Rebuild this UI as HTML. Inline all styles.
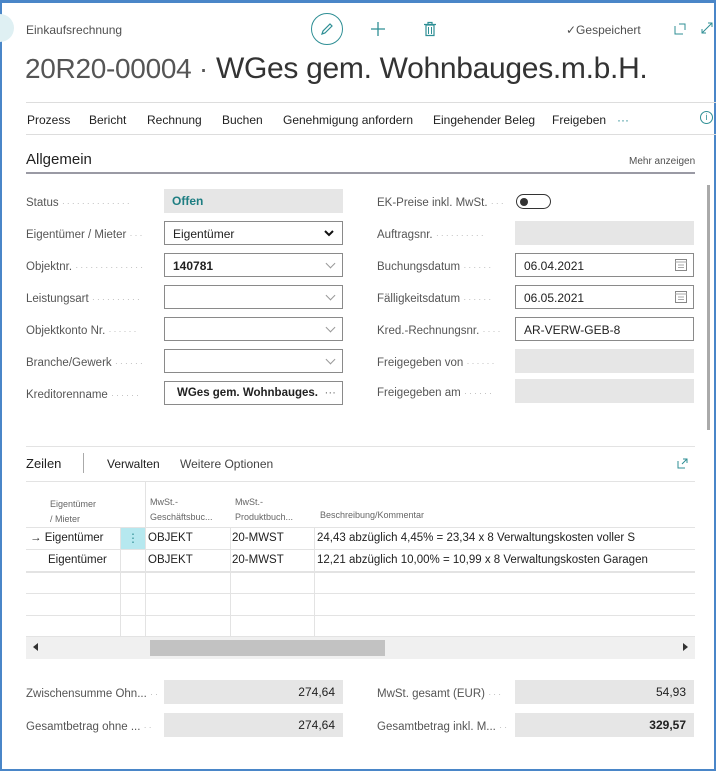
<!DOCTYPE html>
<html><head><meta charset="utf-8">
<style>
*{box-sizing:border-box;margin:0;padding:0}
body{width:716px;height:771px;overflow:hidden;background:#fff;font-family:"Liberation Sans",sans-serif;color:#212121;font-size:12px;position:relative}
.a{position:absolute;white-space:nowrap}
.frame{position:absolute;left:0;top:0;width:716px;height:771px;border:2px solid #4a86c8;border-top-width:3px}
.lbl{position:absolute;font-size:11.5px;color:#555;white-space:nowrap;overflow:hidden;margin-top:1px}
.lbl span.d{color:#bbb;letter-spacing:2px;font-size:9px}
.fld{position:absolute;height:24px;width:179px;border:1px solid #8a8a8a;background:#fff;font-size:12px;padding:5px 8px;white-space:nowrap}
.ro{border:none;background:#e6e6e6}
.chev{position:absolute;right:8px;top:8px;width:7px;height:7px;border-right:1px solid #999;border-bottom:1px solid #999;transform:rotate(45deg)}
.cell{position:absolute;font-size:11.5px;white-space:nowrap}
.hl{position:absolute;background:#e3e3e3;height:1px}
.vl{position:absolute;background:#e3e3e3;width:1px}
</style></head><body>
<div class="frame"></div>
<div class="a" style="left:-14px;top:14px;width:28px;height:28px;border-radius:50%;background:#dff0f3"></div>
<div class="a" style="left:26px;top:23px;font-size:12px;color:#505050">Einkaufsrechnung</div>
<div class="a" style="left:311px;top:13px;width:32px;height:32px;border-radius:50%;border:1.5px solid #2f8f95"></div>
<svg class="a" style="left:319px;top:21px" width="16" height="16" viewBox="0 0 16 16"><path d="M3 13l1-3 7-7 2 2-7 7z" fill="none" stroke="#2f8f95" stroke-width="1.2"/></svg>
<svg class="a" style="left:370px;top:21px" width="16" height="16"><path d="M8 1v14M1 8h14" stroke="#2f8f95" stroke-width="1.3"/></svg>
<svg class="a" style="left:423px;top:21px" width="14" height="16"><path d="M1 3.5h12M5 3V1.5h4V3M3 4h8v10.5H3z" fill="none" stroke="#2f8f95" stroke-width="1.2"/><path d="M5.5 6v7M8.5 6v7" stroke="#2f8f95"/></svg>
<div class="a" style="left:566px;top:23px;font-size:12px;color:#505050">✓Gespeichert</div>
<svg class="a" style="left:674px;top:23px" width="12" height="12"><path d="M1 3v8h8M5 1h6v6" fill="none" stroke="#2f8f95"/></svg>
<svg class="a" style="left:700px;top:21px" width="14" height="14"><path d="M2 12L12 2M8 2h4v4M2 8v4h4" fill="none" stroke="#2f8f95"/></svg>
<div class="a" style="left:25px;top:52px;font-size:30px;color:#333;letter-spacing:-0.3px"><span style="color:#555;font-size:28px">20R20-00004 ·</span> WGes gem. Wohnbauges.m.b.H.</div>
<div class="hl" style="left:26px;top:102px;width:690px;background:#ddd"></div>
<div class="a" style="left:27px;top:113px;font-size:12px">Prozess</div>
<div class="a" style="left:89px;top:113px">Bericht</div>
<div class="a" style="left:147px;top:113px">Rechnung</div>
<div class="a" style="left:222px;top:113px">Buchen</div>
<div class="a" style="left:283px;top:113px">Genehmigung anfordern</div>
<div class="a" style="left:433px;top:113px">Eingehender Beleg</div>
<div class="a" style="left:552px;top:113px">Freigeben</div>
<div class="a" style="left:617px;top:113px;color:#2f8f95">···</div>
<div class="a" style="left:700px;top:111px;width:13px;height:13px;border-radius:50%;border:1px solid #2f8f95;color:#2f8f95;font-size:9px;text-align:center;line-height:11px">i</div>
<div class="hl" style="left:26px;top:134px;width:690px;background:#ddd"></div>
<div class="a" style="left:707px;top:185px;width:3px;height:245px;background:#aaa"></div>
<div class="a" style="left:26px;top:151px;font-size:15px;color:#222">Allgemein</div>
<div class="a" style="left:629px;top:156px;font-size:10px;color:#505050">Mehr anzeigen</div>
<div class="a" style="left:26px;top:172px;width:669px;height:2px;background:#9a9aa4"></div>

<div class="lbl" style="left:26px;top:196px;width:134px">Status <span class="d">··············</span></div>
<div class="fld ro" style="left:164px;top:189px;color:#1e7e82;font-weight:bold">Offen</div>
<div class="lbl" style="left:26px;top:228px;width:134px">Eigentümer / Mieter <span class="d">···</span></div>
<div class="fld" style="left:164px;top:221px">Eigentümer<svg style="position:absolute;right:8px;top:8px" width="10" height="7"><path d="M1 1l4 4 4-4" fill="none" stroke="#111" stroke-width="2"/></svg></div>
<div class="lbl" style="left:26px;top:260px;width:134px">Objektnr. <span class="d">··············</span></div>
<div class="fld" style="left:164px;top:253px;font-weight:bold">140781<div class="chev" style="top:6px"></div></div>
<div class="lbl" style="left:26px;top:292px;width:134px">Leistungsart <span class="d">··········</span></div>
<div class="fld" style="left:164px;top:285px"><div class="chev" style="top:6px"></div></div>
<div class="lbl" style="left:26px;top:324px;width:134px">Objektkonto Nr. <span class="d">······</span></div>
<div class="fld" style="left:164px;top:317px"><div class="chev" style="top:6px"></div></div>
<div class="lbl" style="left:26px;top:356px;width:134px">Branche/Gewerk <span class="d">······</span></div>
<div class="fld" style="left:164px;top:349px"><div class="chev" style="top:6px"></div></div>
<div class="lbl" style="left:26px;top:388px;width:134px">Kreditorenname <span class="d">······</span></div>
<div class="fld" style="left:164px;top:381px;font-weight:bold;padding-left:12px;font-size:11.5px">WGes gem. Wohnbauges.<span style="position:absolute;right:6px;font-weight:normal;color:#777">···</span></div>

<div class="lbl" style="left:377px;top:196px;width:134px">EK-Preise inkl. MwSt. <span class="d">···</span></div>
<div class="a" style="left:516px;top:194px;width:35px;height:15px;border:1.5px solid #333;border-radius:8px"><div style="position:absolute;left:3px;top:2.5px;width:8px;height:8px;border-radius:50%;background:#333"></div></div>
<div class="lbl" style="left:377px;top:228px;width:134px">Auftragsnr. <span class="d">··········</span></div>
<div class="fld ro" style="left:515px;top:221px"></div>
<div class="lbl" style="left:377px;top:260px;width:134px">Buchungsdatum <span class="d">······</span></div>
<div class="fld" style="left:515px;top:253px">06.04.2021<svg style="position:absolute;right:6px;top:5px" width="12" height="12"><rect x="0.5" y="0.5" width="11" height="11" fill="none" stroke="#888"/><path d="M0 3h12M3 6h6M3 8.5h6" stroke="#aaa"/></svg></div>
<div class="lbl" style="left:377px;top:292px;width:134px">Fälligkeitsdatum <span class="d">······</span></div>
<div class="fld" style="left:515px;top:285px">06.05.2021<svg style="position:absolute;right:6px;top:5px" width="12" height="12"><rect x="0.5" y="0.5" width="11" height="11" fill="none" stroke="#888"/><path d="M0 3h12M3 6h6M3 8.5h6" stroke="#aaa"/></svg></div>
<div class="lbl" style="left:377px;top:324px;width:134px">Kred.-Rechnungsnr. <span class="d">····</span></div>
<div class="fld" style="left:515px;top:317px">AR-VERW-GEB-8</div>
<div class="lbl" style="left:377px;top:356px;width:134px">Freigegeben von <span class="d">······</span></div>
<div class="fld ro" style="left:515px;top:349px"></div>
<div class="lbl" style="left:377px;top:386px;width:134px">Freigegeben am <span class="d">······</span></div>
<div class="fld ro" style="left:515px;top:379px"></div>

<div class="hl" style="left:26px;top:446px;width:669px"></div>
<div class="a" style="left:26px;top:456px;font-size:13px">Zeilen</div>
<div class="vl" style="left:83px;top:453px;height:20px;background:#aaa"></div>
<div class="a" style="left:107px;top:457px">Verwalten</div>
<div class="a" style="left:180px;top:457px;color:#444">Weitere Optionen</div>
<svg class="a" style="left:677px;top:458px" width="11" height="11"><path d="M1 3v7h7M6 1h4v4M10 1L5 6" fill="none" stroke="#2f8f95"/></svg>
<div class="hl" style="left:26px;top:481px;width:669px"></div>
<div class="vl" style="left:145px;top:481px;height:155px"></div>
<div class="a" style="left:50px;top:497px;font-size:9px;color:#666;line-height:15px">Eigentümer<br>/ Mieter</div>
<div class="a" style="left:150px;top:495px;font-size:9px;color:#666;line-height:15px">MwSt.-<br>Geschäftsbuc...</div>
<div class="a" style="left:235px;top:495px;font-size:9px;color:#666;line-height:15px">MwSt.-<br>Produktbuch...</div>
<div class="a" style="left:320px;top:510px;font-size:9px;color:#666">Beschreibung/Kommentar</div>
<div class="hl" style="left:26px;top:527px;width:669px"></div>
<div class="hl" style="left:26px;top:549px;width:669px"></div>
<div class="hl" style="left:26px;top:571px;width:669px;height:2px"></div>
<div class="hl" style="left:26px;top:593px;width:669px"></div>
<div class="hl" style="left:26px;top:615px;width:669px"></div>
<div class="hl" style="left:26px;top:636px;width:669px"></div>
<div class="vl" style="left:120px;top:527px;height:109px"></div>
<div class="vl" style="left:230px;top:527px;height:109px"></div>
<div class="vl" style="left:314px;top:527px;height:109px"></div>
<div class="a" style="left:121px;top:528px;width:24px;height:21px;background:#b6e8ef;color:#2f8f95;text-align:center;line-height:20px">⋮</div>
<div class="cell" style="left:30px;top:532px">→ Eigentümer</div>
<div class="cell" style="left:148px;top:532px">OBJEKT</div>
<div class="cell" style="left:232px;top:532px">20-MWST</div>
<div class="cell" style="left:317px;top:532px">24,43 abzüglich 4,45% = 23,34 x 8 Verwaltungskosten voller S</div>
<div class="cell" style="left:48px;top:554px">Eigentümer</div>
<div class="cell" style="left:148px;top:554px">OBJEKT</div>
<div class="cell" style="left:232px;top:554px">20-MWST</div>
<div class="cell" style="left:317px;top:554px">12,21 abzüglich 10,00% = 10,99 x 8 Verwaltungskosten Garagen</div>
<div class="a" style="left:26px;top:637px;width:669px;height:22px;background:#f0f0f0"></div>
<div class="a" style="left:150px;top:640px;width:235px;height:16px;background:#c2c2c2"></div>
<div class="a" style="left:33px;top:643px;width:0;height:0;border:4px solid transparent;border-right:5px solid #333;border-left:none"></div>
<div class="a" style="left:683px;top:643px;width:0;height:0;border:4px solid transparent;border-left:5px solid #333;border-right:none"></div>

<div class="lbl" style="left:26px;top:687px;width:134px">Zwischensumme Ohn... <span class="d">··</span></div>
<div class="fld ro" style="left:164px;top:680px;text-align:right">274,64</div>
<div class="lbl" style="left:26px;top:720px;width:134px">Gesamtbetrag ohne ... <span class="d">··</span></div>
<div class="fld ro" style="left:164px;top:713px;text-align:right">274,64</div>
<div class="lbl" style="left:377px;top:687px;width:134px">MwSt. gesamt (EUR) <span class="d">···</span></div>
<div class="fld ro" style="left:515px;top:680px;text-align:right">54,93</div>
<div class="lbl" style="left:377px;top:720px;width:134px">Gesamtbetrag inkl. M... <span class="d">··</span></div>
<div class="fld ro" style="left:515px;top:713px;text-align:right;font-weight:bold">329,57</div>
</body></html>
